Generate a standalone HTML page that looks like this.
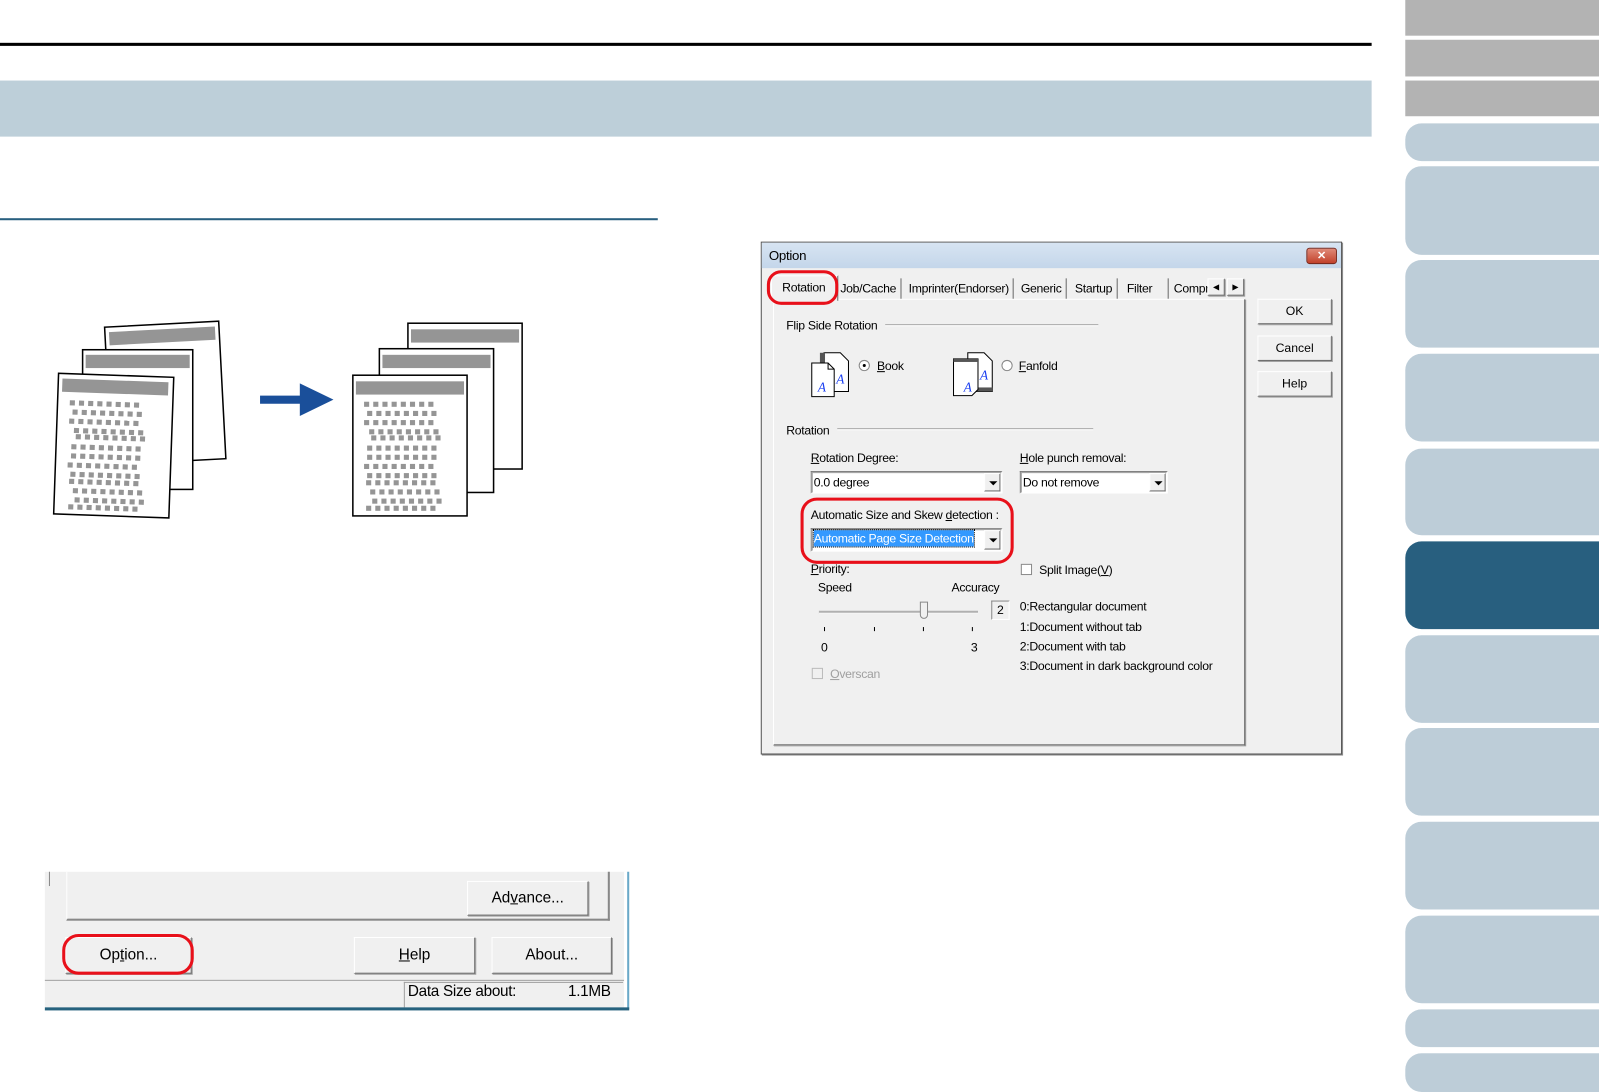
<!DOCTYPE html>
<html><head><meta charset="utf-8">
<style>
html,body{margin:0;padding:0;background:#fff;overflow:hidden;width:1599px;height:1092px}
#w{position:absolute;left:0;top:0;width:1568px;height:1071px;transform:scale(1.0198,1.0196);transform-origin:0 0;font-family:"Liberation Sans",sans-serif}
.a{position:absolute}
.sb{position:absolute;left:1378px;width:190px;background:#bdcdd8;border-radius:16px 0 0 16px}
.gr{position:absolute;left:1378px;width:190px;background:#b3b3b3}
.t{position:absolute;font-size:12px;color:#000;white-space:nowrap;letter-spacing:-0.3px}
.btn{position:absolute;background:#f0f0f0;border:1px solid #fff;border-right-color:#696969;border-bottom-color:#696969;box-shadow:1px 1px 0 #a0a0a0;font-size:12px;text-align:center;box-sizing:border-box}
.sel{position:absolute;background:#fff;border:1px solid #7a7a7a;border-right-color:#fff;border-bottom-color:#fff;box-shadow:inset 1px 1px 0 #a0a0a0;box-sizing:border-box;font-size:12px;padding:3px 2px;letter-spacing:-0.3px}
.dd{position:absolute;right:1px;top:1px;bottom:1px;width:16px;background:#f0f0f0;border:1px solid #fff;border-right-color:#696969;border-bottom-color:#696969;box-sizing:border-box}
.dd:after{content:"";position:absolute;left:4px;top:7px;border:4px solid transparent;border-top:4px solid #000;border-bottom:0}
.ln{position:absolute;height:0;border-top:1px solid #a0a0a0;border-bottom:1px solid #fff}
.tab{position:absolute;top:273px;height:20px;font-size:12px;border-right:1px solid #696969;padding:0 4px;line-height:20px;letter-spacing:-0.3px}
.cb{position:absolute;width:11px;height:11px;background:#fff;border:1px solid #8a8a8a;box-sizing:border-box}
</style></head><body><div id="w">
<div class="a" style="left:0;top:42px;width:1345px;height:3px;background:#000"></div>
<div class="a" style="left:0;top:79px;width:1345px;height:55px;background:#bdcfd9"></div>
<div class="a" style="left:0;top:214px;width:645px;height:2px;background:#285f7f"></div>
<div class="gr" style="top:0;height:35px"></div>
<div class="gr" style="top:39px;height:36px"></div>
<div class="gr" style="top:79px;height:35px"></div>
<div class="sb" style="top:121px;height:37px"></div>
<div class="sb" style="top:163px;height:87px"></div>
<div class="sb" style="top:255px;height:86px"></div>
<div class="sb" style="top:347px;height:86px"></div>
<div class="sb" style="top:440px;height:85px"></div>
<div class="sb" style="top:531px;height:86px;background:#285f7f"></div>
<div class="sb" style="top:623px;height:86px"></div>
<div class="sb" style="top:714px;height:86px"></div>
<div class="sb" style="top:806px;height:86px"></div>
<div class="sb" style="top:898px;height:86px"></div>
<div class="sb" style="top:990px;height:37px"></div>
<div class="sb" style="top:1033px;height:38px"></div>

<svg class="a" style="left:40px;top:300px" width="490" height="220" viewBox="40 300 490 220">
 <defs>
  <g id="dots" fill="#959595">
   <rect x="0" y="0" width="5" height="5"/><rect x="9" y="0" width="5" height="5"/><rect x="18" y="0" width="5" height="5"/><rect x="27" y="0" width="5" height="5"/><rect x="36" y="0" width="5" height="5"/><rect x="45" y="0" width="5" height="5"/><rect x="54" y="0" width="5" height="5"/><rect x="63" y="0" width="5" height="5"/>
  </g>
  <g id="col">
   <use href="#dots" x="0" y="0"/><use href="#dots" x="3" y="9"/><use href="#dots" x="0" y="18"/><use href="#dots" x="5" y="27"/><use href="#dots" x="7" y="33"/><use href="#dots" x="3" y="43"/><use href="#dots" x="3" y="52"/><use href="#dots" x="0" y="61"/><use href="#dots" x="3" y="70"/><use href="#dots" x="2" y="77"/><use href="#dots" x="6" y="86"/><use href="#dots" x="8" y="95"/><use href="#dots" x="2" y="102"/>
  </g>
 </defs>
 <g transform="rotate(-3 160 385)"><rect x="106" y="318" width="112" height="135" fill="#fff" stroke="#000" stroke-width="1.5"/><rect x="110" y="323" width="104" height="13" fill="#959595"/></g>
 <rect x="81" y="343" width="108" height="137" fill="#fff" stroke="#000" stroke-width="1.5"/><rect x="84" y="348" width="102" height="13" fill="#959595"/>
 <g transform="rotate(2 110 437)"><rect x="55" y="368" width="113" height="138" fill="#fff" stroke="#000" stroke-width="1.5"/><rect x="59" y="373" width="104" height="13" fill="#959595"/><use href="#col" x="67" y="394"/></g>
 <polygon points="255,388 294,388 294,376 327,392 294,408 294,396 255,396" fill="#1a4f9a"/>
 <rect x="400" y="317" width="112" height="143" fill="#fff" stroke="#000" stroke-width="1.5"/><rect x="403" y="323" width="106" height="13" fill="#959595"/>
 <rect x="372" y="342" width="112" height="141" fill="#fff" stroke="#000" stroke-width="1.5"/><rect x="375" y="348" width="106" height="13" fill="#959595"/>
 <rect x="346" y="368" width="112" height="138" fill="#fff" stroke="#000" stroke-width="1.5"/><rect x="349" y="374" width="106" height="13" fill="#959595"/><use href="#col" x="357" y="394"/>
</svg>

<div class="a" style="left:746px;top:237px;width:570px;height:503px;background:#f0f0f0;border:1px solid #555;box-sizing:border-box;box-shadow:1px 1px 0 #888"></div>
<div class="a" style="left:747px;top:238px;width:568px;height:25px;background:linear-gradient(#d7e4f2,#c4d6ea)"></div>
<div class="t" style="left:754px;top:243px;font-size:13px">Option</div>
<div class="a" style="left:1281px;top:243px;width:30px;height:16px;background:linear-gradient(#e08a78,#c2422c);border:1px solid #7a2a1e;border-radius:3px;box-sizing:border-box;color:#fff;font-size:11px;text-align:center;line-height:14px;font-weight:bold">✕</div>
<div class="a" style="left:758px;top:293px;width:463px;height:438px;border:1px solid #fff;border-right-color:#696969;border-bottom-color:#696969;box-sizing:border-box;box-shadow:1px 1px 0 #a0a0a0"></div>
<div class="a" style="left:756px;top:270px;width:64px;height:24px;background:#f0f0f0;border:1px solid #fff;border-right:1px solid #696969;border-bottom:none"></div>
<div class="t" style="left:767px;top:275px">Rotation</div>
<div class="tab" style="left:820px">Job/Cache</div>
<div class="tab" style="left:887px">Imprinter(Endorser)</div>
<div class="tab" style="left:997px">Generic</div>
<div class="tab" style="left:1050px">Startup</div>
<div class="tab" style="left:1101px;width:36px">Filter</div>
<div class="tab" style="left:1147px;border:none;width:30px;overflow:hidden">Compr</div>
<div class="btn" style="left:1184px;top:273px;width:17px;height:17px;font-size:8px;line-height:15px">◀</div>
<div class="btn" style="left:1203px;top:273px;width:17px;height:17px;font-size:8px;line-height:15px">▶</div>
<div class="a" style="left:752px;top:265px;width:70px;height:34px;border:3px solid #e8101a;border-radius:14px;box-sizing:border-box"></div>
<div class="btn" style="left:1233px;top:293px;width:73px;height:25px;line-height:23px">OK</div>
<div class="btn" style="left:1233px;top:329px;width:73px;height:25px;line-height:23px">Cancel</div>
<div class="btn" style="left:1233px;top:364px;width:73px;height:25px;line-height:23px">Help</div>
<div class="t" style="left:771px;top:312px">Flip Side Rotation</div>
<div class="ln" style="left:868px;top:318px;width:209px"></div>
<svg class="a" style="left:794px;top:344px" width="46" height="46" viewBox="0 0 46 46">
 <path d="M14 2h16l8 8v30H14z" fill="#fff" stroke="#000"/><rect x="10" y="2" width="5" height="38" fill="#555"/>
 <path d="M2 12h16l6 6v27H2z" fill="#fff" stroke="#000"/><path d="M18 12v6h6" fill="none" stroke="#000"/>
 <text x="8" y="40" font-size="13" font-style="italic" fill="#1a3ef0" font-family="Liberation Serif">A</text>
 <text x="26" y="32" font-size="13" font-style="italic" fill="#1a3ef0" font-family="Liberation Serif">A</text>
</svg>
<div class="a" style="left:842px;top:353px;width:11px;height:11px;border-radius:50%;background:#fff;border:1px solid #888;box-sizing:border-box"><div class="a" style="left:3px;top:3px;width:3px;height:3px;border-radius:50%;background:#000"></div></div>
<div class="t" style="left:860px;top:352px"><u>B</u>ook</div>
<svg class="a" style="left:933px;top:344px" width="46" height="46" viewBox="0 0 46 46">
 <path d="M16 2h16l8 8v30H16z" fill="#fff" stroke="#000"/><rect x="16" y="36" width="24" height="4" fill="#555"/>
 <path d="M2 8h24v30l-6 6H2z" fill="#fff" stroke="#000"/><rect x="2" y="8" width="24" height="3" fill="#555"/>
 <text x="12" y="40" font-size="13" font-style="italic" fill="#1a3ef0" font-family="Liberation Serif">A</text>
 <text x="28" y="28" font-size="13" font-style="italic" fill="#1a3ef0" font-family="Liberation Serif">A</text>
</svg>
<div class="a" style="left:982px;top:353px;width:11px;height:11px;border-radius:50%;background:#fff;border:1px solid #888;box-sizing:border-box"></div>
<div class="t" style="left:999px;top:352px"><u>F</u>anfold</div>
<div class="t" style="left:771px;top:415px">Rotation</div>
<div class="ln" style="left:821px;top:420px;width:251px"></div>
<div class="t" style="left:795px;top:442px"><u>R</u>otation Degree:</div>
<div class="sel" style="left:795px;top:462px;width:188px;height:22px">0.0 degree<div class="dd"></div></div>
<div class="t" style="left:1000px;top:442px"><u>H</u>ole punch removal:</div>
<div class="sel" style="left:1000px;top:462px;width:145px;height:22px">Do not remove<div class="dd"></div></div>
<div class="t" style="left:795px;top:498px">Automatic Size and Skew <u>d</u>etection :</div>
<div class="sel" style="left:795px;top:518px;width:188px;height:23px;padding:2px 2px"><span style="background:#3399ff;color:#fff;outline:1px dotted #000;padding:1px 0">Automatic Page Size Detection</span><div class="dd"></div></div>
<div class="a" style="left:785px;top:488px;width:209px;height:65px;border:3px solid #e8101a;border-radius:16px;box-sizing:border-box"></div>
<div class="t" style="left:795px;top:551px"><u>P</u>riority:</div>
<div class="t" style="left:802px;top:569px">Speed</div>
<div class="t" style="left:933px;top:569px">Accuracy</div>
<div class="a" style="left:803px;top:599px;width:156px;height:2px;background:#b0b0b0;border-bottom:1px solid #fff"></div>
<div class="a" style="left:902px;top:590px;width:8px;height:17px;background:#f0f0f0;border:1px solid #888;box-sizing:border-box;border-radius:0 0 4px 4px"></div>
<div class="a" style="left:808px;top:615px;width:1px;height:4px;background:#000"></div>
<div class="a" style="left:857px;top:615px;width:1px;height:4px;background:#000"></div>
<div class="a" style="left:905px;top:615px;width:1px;height:4px;background:#000"></div>
<div class="a" style="left:953px;top:615px;width:1px;height:4px;background:#000"></div>
<div class="a" style="left:972px;top:589px;width:18px;height:19px;border:1px solid #888;border-right-color:#fff;border-bottom-color:#fff;box-sizing:border-box;font-size:12px;text-align:center;line-height:17px">2</div>
<div class="t" style="left:805px;top:628px">0</div>
<div class="t" style="left:952px;top:628px">3</div>
<div class="cb" style="left:796px;top:655px;border-color:#bbb;background:#f0f0f0"></div>
<div class="t" style="left:814px;top:654px;color:#a0a0a0"><u>O</u>verscan</div>
<div class="cb" style="left:1001px;top:553px"></div>
<div class="t" style="left:1019px;top:552px">Split Image(<u>V</u>)</div>
<div class="t" style="left:1000px;top:588px">0:Rectangular document</div>
<div class="t" style="left:1000px;top:608px">1:Document without tab</div>
<div class="t" style="left:1000px;top:627px">2:Document with tab</div>
<div class="t" style="left:1000px;top:646px">3:Document in dark background color</div>

<div class="a" style="left:44px;top:855px;width:573px;height:136px;background:#f0f0f0"></div>
<div class="a" style="left:44px;top:855px;width:4px;height:14px;border-right:1px solid #888"></div>
<div class="a" style="left:65px;top:855px;width:533px;height:48px;border-left:1px solid #fff;border-right:2px solid #888;border-bottom:2px solid #888;box-sizing:border-box"></div>
<div class="btn" style="left:458px;top:864px;width:119px;height:34px;line-height:32px;font-size:15px">Ad<u>v</u>ance...</div>
<div class="btn" style="left:64px;top:919px;width:124px;height:36px;line-height:34px;font-size:15px">Op<u>t</u>ion...</div>
<div class="a" style="left:61px;top:916px;width:129px;height:40px;border:3px solid #e8101a;border-radius:16px;box-sizing:border-box"></div>
<div class="btn" style="left:347px;top:919px;width:119px;height:36px;line-height:34px;font-size:15px"><u>H</u>elp</div>
<div class="btn" style="left:482px;top:919px;width:118px;height:36px;line-height:34px;font-size:15px">About...</div>
<div class="a" style="left:44px;top:961px;width:568px;height:1px;background:#a0a0a0"></div>
<div class="a" style="left:396px;top:963px;width:215px;height:25px;border-left:1px solid #a0a0a0;border-top:1px solid #a0a0a0;box-sizing:border-box"></div>
<div class="t" style="left:400px;top:964px;font-size:15px">Data Size about:</div>
<div class="t" style="left:557px;top:964px;font-size:15px">1.1MB</div>
<div class="a" style="left:612px;top:855px;width:3px;height:135px;background:#fff;border-right:2px solid #6aa9c9"></div>
<div class="a" style="left:44px;top:988px;width:573px;height:3px;background:#26627e"></div>
</div></body></html>
